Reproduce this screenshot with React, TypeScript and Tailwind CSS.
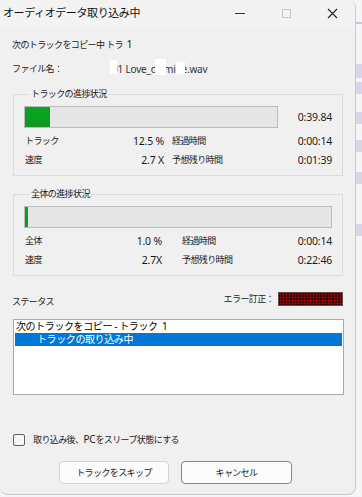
const FONT = "font-['Noto_Sans','Noto_Sans_CJK_JP',sans-serif]";
const NUM = "text-[10.5px] tracking-[-0.2px]";

type StatRow = {
  label: string;
  value: string;
  timeLabel: string;
  time: string;
};

type GroupProps = {
  title: string;
  percent: number;
  barWidthClass: string;
  barTime?: string;
  rows: StatRow[];
  valueColClass: string;
  timeLabelClass: string;
  topClass: string;
};

function ProgressBar({ percent, widthClass }: { percent: number; widthClass: string }) {
  return (
    <div className={`h-[22px] ${widthClass} border border-[#bcbcbc] bg-[#e6e6e6]`}>
      <div
        className="h-full bg-[linear-gradient(180deg,#0aa622,#06a11f_60%,#1a8f26)]"
        style={{ width: `${percent}%` }}
      />
    </div>
  );
}

function ProgressGroup({
  title,
  percent,
  barWidthClass,
  barTime,
  rows,
  valueColClass,
  timeLabelClass,
  topClass,
}: GroupProps) {
  return (
    <fieldset className={`${topClass} ml-[1px] w-[330px] border border-[#dcdcdc] px-[10px] pb-[9px]`}>
      <legend className="ml-[6px] px-[1px] leading-[12px] text-[#1a1a1a]">{title}</legend>
      <div className="mt-[6px] flex items-center justify-between">
        <ProgressBar percent={percent} widthClass={barWidthClass} />
        {barTime ? <span className={`pt-[2px] text-[#222] ${NUM}`}>{barTime}</span> : null}
      </div>
      <div className="mt-[7px] flex flex-col gap-[7px]">
        {rows.map((row) => (
          <div key={row.label + row.time} className="flex h-[12px] items-center leading-[12px]">
            <span className="w-[40px] pl-[1px]">{row.label}</span>
            <span className={`${valueColClass} text-right ${NUM}`}>{row.value}</span>
            <span className={timeLabelClass}>{row.timeLabel}</span>
            <span className={`ml-auto ${NUM}`}>{row.time}</span>
          </div>
        ))}
      </div>
    </fieldset>
  );
}

function LedPanel() {
  return (
    <div className="h-[14px] w-[65px] border border-[#555] bg-[#2a0000] bg-[radial-gradient(circle,#a30000_45%,transparent_55%)] bg-[length:3px_3px]" />
  );
}

function TitleBar() {
  return (
    <div className="flex h-[26px] items-center bg-[#f3f3f3]">
      <span className="pl-[3px] text-[11px] tracking-[-0.4px] text-[#111]">
        オーディオデータ取り込み中
      </span>
      <div className="ml-auto flex h-full items-center">
        <div className="flex w-[46px] items-center justify-center">
          <div className="h-px w-[10px] bg-[#333]" />
        </div>
        <div className="flex w-[46px] items-center justify-center">
          <div className="h-[9px] w-[9px] border border-[#c4c4c4]" />
        </div>
        <div className="flex w-[46px] items-center justify-center">
          <svg width="11" height="11" viewBox="0 0 11 11" aria-hidden="true">
            <path d="M1 1L10 10M10 1L1 10" stroke="#222" strokeWidth="1.1" />
          </svg>
        </div>
      </div>
    </div>
  );
}

export default function App() {
  return (
    <div className={`flex h-[497px] w-[362px] bg-[#f5f5f7] ${FONT}`}>
      <div className="flex h-[495px] w-[356px] flex-col overflow-hidden rounded-b-[8px] rounded-tr-[8px] border-r border-b border-[#c9c9c9] bg-[#f0f0f0] text-[9px] tracking-[-0.6px] text-[#1a1a1a]">
        <TitleBar />

        <div className="flex flex-col px-[12px]">
          <div className="mt-[12px] h-[12px] leading-[12px]">
            次のトラックをコピー中 トラ&nbsp;&nbsp;<span className="text-[10.5px]">1</span>
          </div>
          <div className="mt-[13px] flex h-[12px] items-center leading-[12px]">
            <span className="w-[100px]">ファイル名：</span>
            <span className="relative text-[10px] tracking-[-0.2px] text-[#333]">
              01 Love_of_mine.wav
              <span className="absolute top-[-3px] left-[-2px] h-[14px] w-[7px] bg-white" />
              <span className="absolute top-[-4px] left-[43px] h-[16px] w-[11px] bg-white" />
              <span className="absolute top-[-1px] left-[64px] h-[12px] w-[9px] bg-white" />
            </span>
          </div>

          <ProgressGroup
            title="トラックの進捗状況"
            percent={10}
            barWidthClass="w-[254px]"
            barTime="0:39.84"
            topClass="mt-[13px]"
            valueColClass="w-[100px]"
            timeLabelClass="pl-[8px]"
            rows={[
              { label: "トラック", value: "12.5 %", timeLabel: "経過時間", time: "0:00:14" },
              { label: "速度", value: "2.7 X", timeLabel: "予想残り時間", time: "0:01:39" },
            ]}
          />

          <ProgressGroup
            title="全体の進捗状況"
            percent={1}
            barWidthClass="w-[308px]"
            topClass="mt-[12px]"
            valueColClass="w-[98px]"
            timeLabelClass="pl-[20px]"
            rows={[
              { label: "全体", value: "1.0 %", timeLabel: "経過時間", time: "0:00:14" },
              { label: "速度", value: "2.7X", timeLabel: "予想残り時間", time: "0:22:46" },
            ]}
          />

          <div className="mt-[14px] flex items-center">
            <span className="pt-[6px] leading-[12px]">ステータス</span>
            <span className="mr-[4px] ml-auto leading-[12px]">エラー訂正：</span>
            <LedPanel />
          </div>

          <div className="mt-[11px] ml-[1px] h-[76px] w-[331px] border border-[#a9a9b0] bg-white px-px text-[10px] tracking-[-0.4px]">
            <div className="h-[13px] pl-[1px] leading-[13px] text-black">
              次のトラックをコピー - トラック&nbsp;&nbsp;1
            </div>
            <div className="h-[13px] bg-[#0078d7] pl-[22px] leading-[13px] text-white">
              トラックの取り込み中
            </div>
          </div>

          <label className="mt-[38px] ml-[1px] flex items-center gap-[8px]">
            <span className="h-[12px] w-[12px] rounded-[2px] border border-[#5f5f5f] bg-[#f7f7f7]" />
            <span className="leading-[12px]">
              取り込み後、<span className="text-[10px] tracking-[-0.2px]">PC</span>をスリープ状態にする
            </span>
          </label>

          <div className="mt-[15px] flex gap-[12px] pl-[47px]">
            <button
              type="button"
              className="h-[23px] w-[110px] rounded-[4px] border border-[#d3d3d3] bg-[#fbfbfb] text-[9px]"
            >
              トラックをスキップ
            </button>
            <button
              type="button"
              className="h-[23px] w-[111px] rounded-[4px] border border-[#4c93d8] bg-[#fbfbfb] text-[9px]"
            >
              キャンセル
            </button>
          </div>
        </div>
      </div>
      <div className="flex flex-1 flex-col">
        <div className="mt-[22px] h-[2px] bg-[#c9c9d6]" />
        <div className="mt-[40px] h-[14px] bg-[#d6d6e6]" />
        <div className="mt-[4px] h-[12px] bg-[#d6d6e6]" />
        <div className="mt-[18px] h-[12px] bg-[#d6d6e6]" />
        <div className="mt-[16px] h-[12px] bg-[#d6d6e6]" />
        <div className="mt-[20px] h-[12px] bg-[#d6d6e6]" />
        <div className="mt-[40px] h-[12px] bg-[#d6d6e6]" />
      </div>
    </div>
  );
}
